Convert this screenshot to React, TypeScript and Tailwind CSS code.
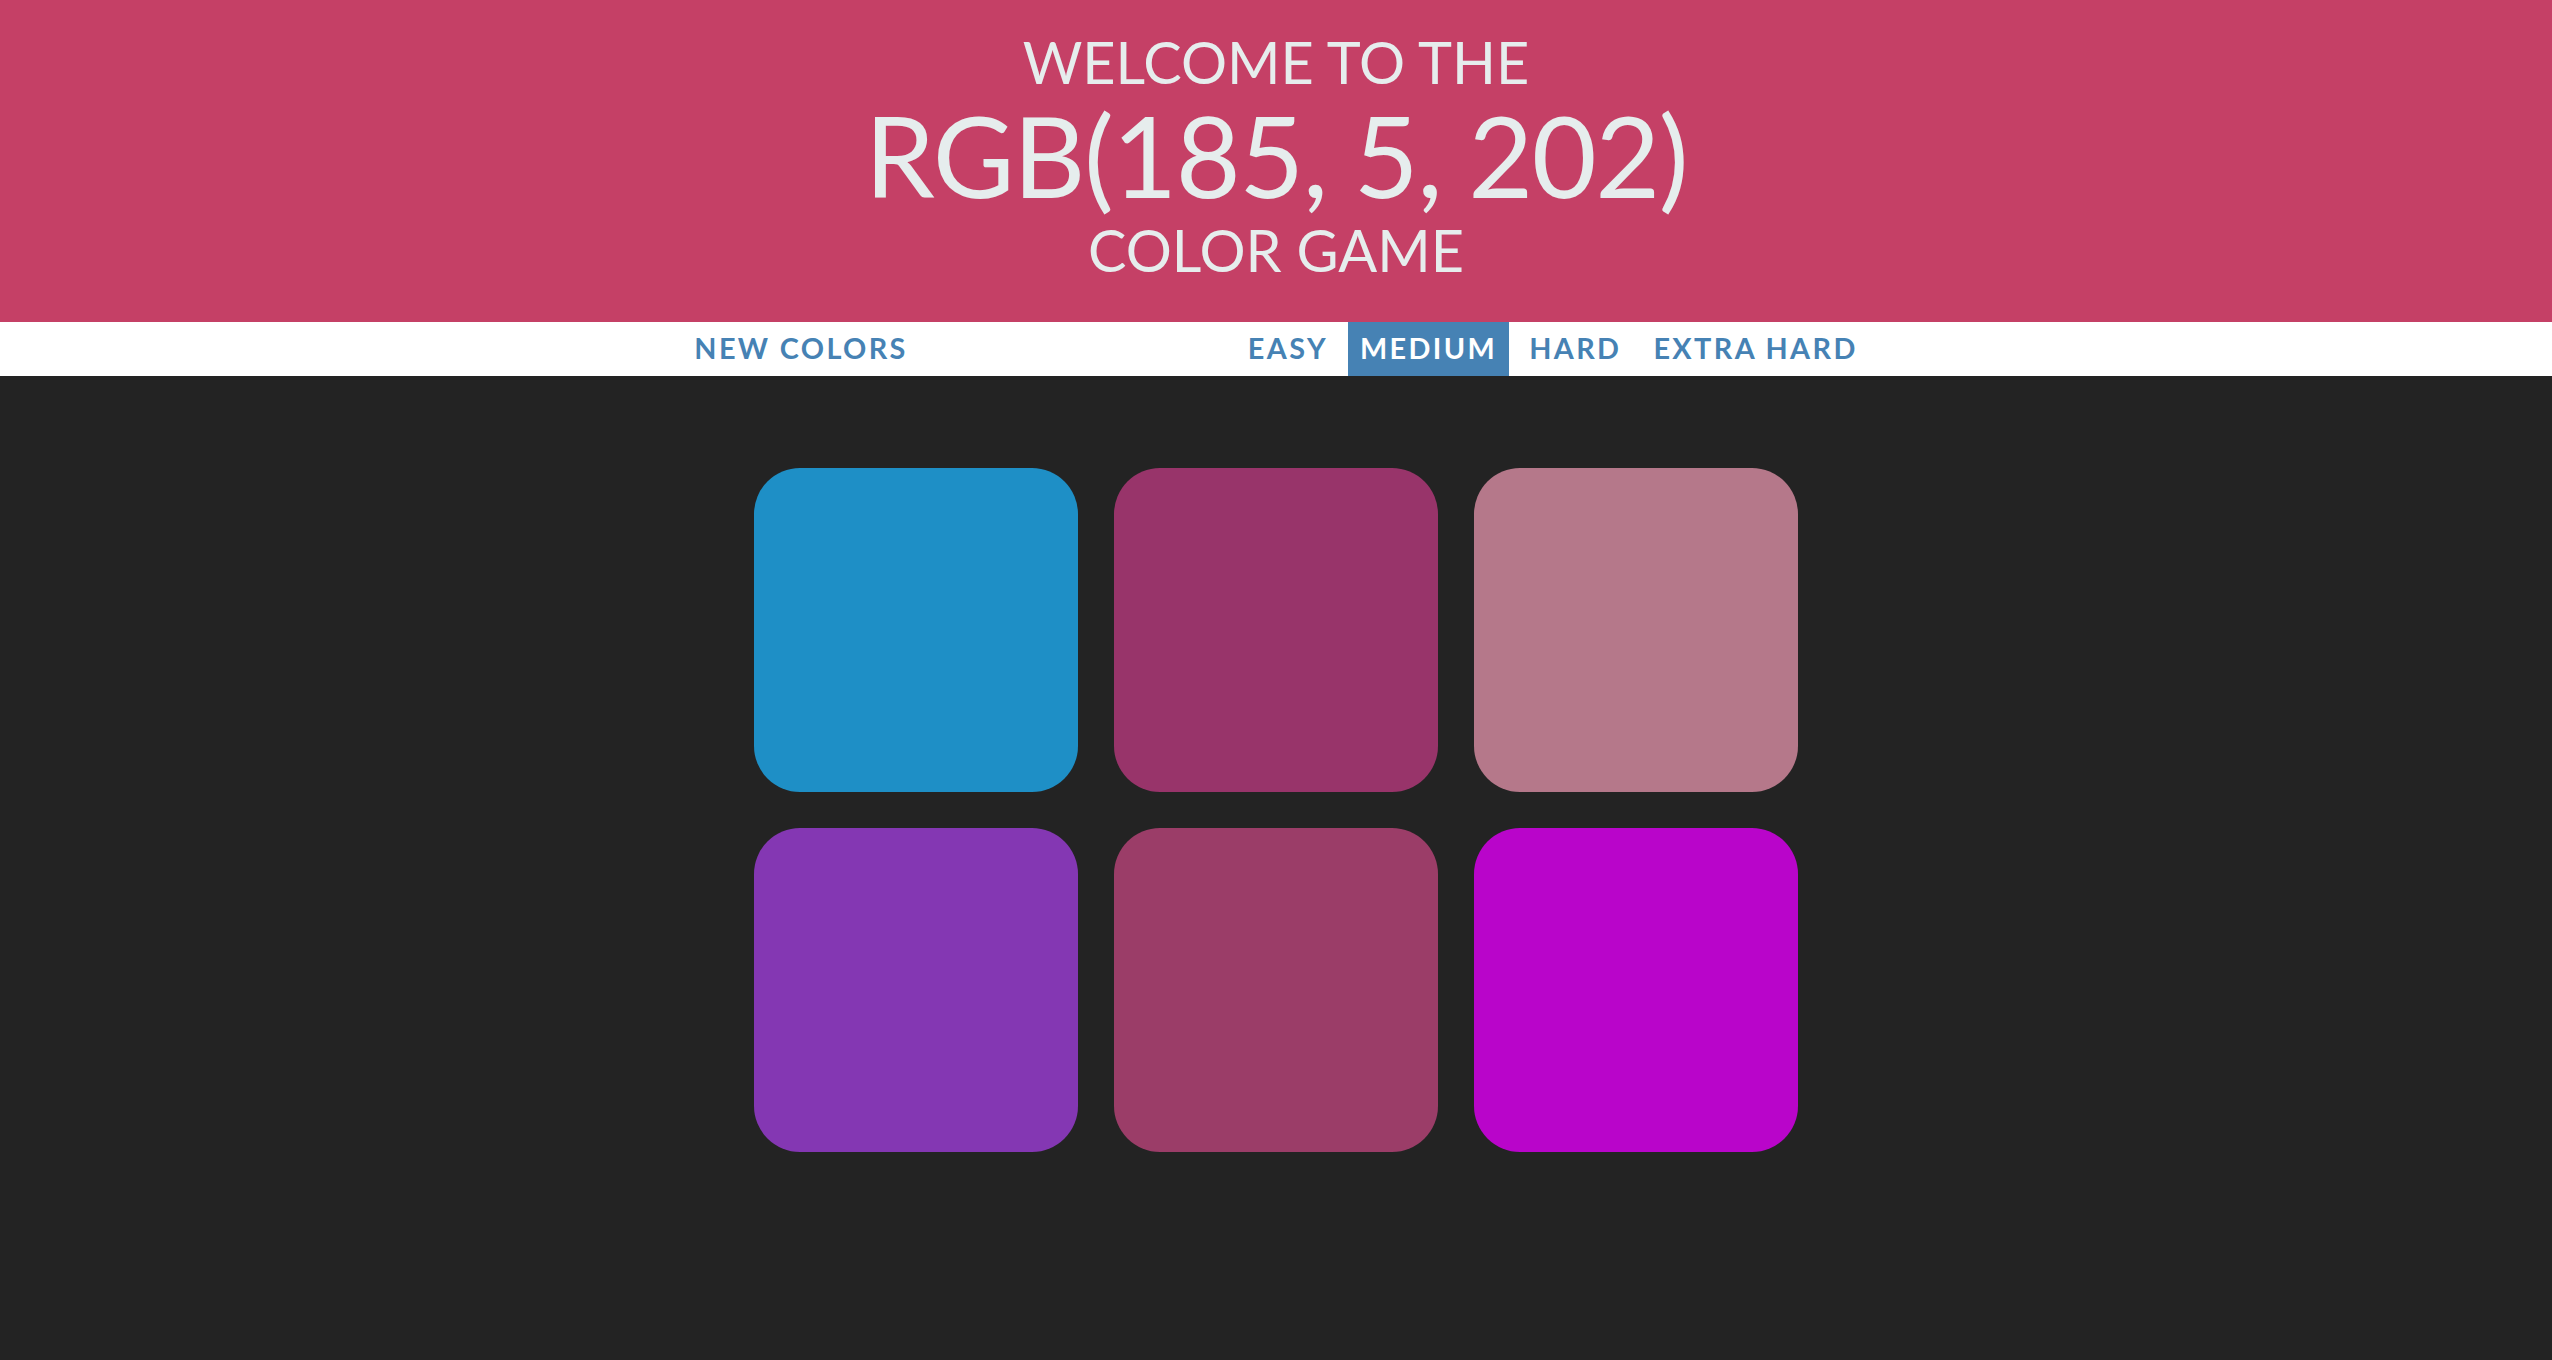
import { useState } from 'react';

const squares = ['#1e8fc6', '#98346a', '#b5788a', '#8437b3', '#9b3d68', '#b905ca'];
const modes = ['Easy', 'Medium', 'Hard', 'Extra Hard'];

const App = () => {
  const [mode, setMode] = useState('Medium');

  return (
    <div className="min-h-[1360px] bg-[#232323] font-['Lato',sans-serif]">
      {/* Header */}
      <h1 className="h-[322px] bg-[#c54066] text-[#e6eded] uppercase text-center flex flex-col items-center pt-[33px] font-normal">
        <span className="text-[57.6px] leading-none">Welcome to the</span>
        <span className="mt-[8px] text-[112px] leading-none tracking-[-1.5px]">RGB(185, 5, 202)</span>
        <span className="mt-[10px] text-[57.6px] leading-none">Color Game</span>
      </h1>

      {/* Stripe */}
      <div className="h-[54px] bg-white flex items-stretch justify-center">
        <button className="px-3 uppercase font-bold text-[28.8px] tracking-[2.4px] text-[#4682b4]">
          New Colors
        </button>
        <span className="w-[316px]" />
        <div className="flex gap-[8px]">
          {modes.map((m) => (
            <button
              key={m}
              onClick={() => setMode(m)}
              className={`px-3 uppercase font-bold text-[28.8px] tracking-[2.4px] ${
                mode === m ? 'bg-[#4682b4] text-white' : 'text-[#4682b4]'
              }`}
            >
              {m}
            </button>
          ))}
        </div>
      </div>

      {/* Squares */}
      <div className="w-[1080px] mx-auto pt-[74px] grid grid-cols-3">
        {squares.map((c, i) => (
          <div key={i} className="m-[18px] w-[324px] h-[324px] rounded-[46px]" style={{ backgroundColor: c }} />
        ))}
      </div>
    </div>
  );
};

export default App;
